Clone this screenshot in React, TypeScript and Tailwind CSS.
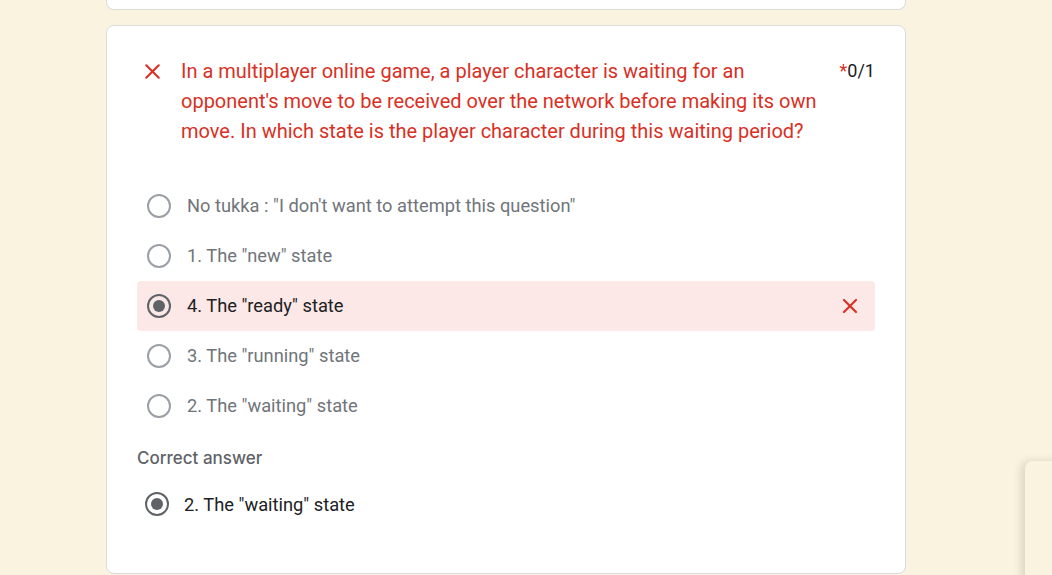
import { X } from "lucide-react";

const opciones = [
  { id: "a", texto: 'No tukka : "I don\'t want to attempt this question"' },
  { id: "b", texto: '1. The "new" state' },
  { id: "c", texto: '4. The "ready" state', elegida: true },
  { id: "d", texto: '3. The "running" state' },
  { id: "e", texto: '2. The "waiting" state' },
];

function Radio({ checked }: { checked?: boolean }) {
  return (
    <div
      className={`w-[24px] h-[24px] rounded-full border-2 flex items-center justify-center flex-shrink-0 ${
        checked ? "border-[#5f6368]" : "border-[#9aa0a6]"
      }`}
    >
      {checked && <div className="w-[12px] h-[12px] rounded-full bg-[#5f6368]" />}
    </div>
  );
}

export default function App() {
  return (
    <main className="h-[575px] overflow-hidden bg-[#faf3df] relative" style={{ fontFamily: "Roboto, 'Liberation Sans', sans-serif" }}>
      <div className="ml-[106px] w-[800px]">
        <div className="h-[10px] bg-white border border-t-0 border-[#dadce0] rounded-b-lg" />

        <div className="mt-[15px] bg-white border border-[#dadce0] rounded-lg h-[549px] pl-[30px] pr-[30px] pt-[30px]">
          <div className="flex items-start">
            <X size={25} strokeWidth={2} className="text-[#d93025] mt-[3px] ml-[3px] flex-shrink-0" />
            <p className="ml-[16px] text-[20px] leading-[30px] text-[#d93025] w-[655px] flex-shrink-0">
              In a multiplayer online game, a player character is waiting for an opponent's move to be received over the network before making its own move. In which state is the player character during this waiting period?
            </p>
            <div className="ml-auto text-[18px] leading-[30px] text-[#202124]">
              <span className="text-[#d93025]">*</span>0/1
            </div>
          </div>

          <div className="mt-[35px] flex flex-col">
            {opciones.map((o) => (
              <div
                key={o.id}
                className={`h-[50px] flex items-center pl-[10px] pr-[13px] rounded-[4px] ${o.elegida ? "bg-[#fce8e6]" : ""}`}
              >
                <Radio checked={o.elegida} />
                <span className={`ml-[16px] text-[18.3px] ${o.elegida ? "text-[#202124]" : "text-[#70757a]"}`}>
                  {o.texto}
                </span>
                {o.elegida && <X size={24} strokeWidth={2.2} className="ml-auto text-[#d93025]" />}
              </div>
            ))}
          </div>

          <p className="mt-[15px] text-[17px] font-medium text-[#5f6368]" style={{ fontFamily: "Inter, 'Open Sans', sans-serif" }}>
            Correct answer
          </p>
          <div className="mt-[19px] flex items-center pl-[8px]">
            <Radio checked />
            <span className="ml-[15px] text-[18.3px] text-[#202124]">2. The "waiting" state</span>
          </div>
        </div>
      </div>

      <div className="absolute left-[1025px] top-[461px] w-[60px] h-[150px] bg-[#faf3df] rounded-tl-lg shadow-[-4px_0_8px_rgba(0,0,0,0.12)]" />
    </main>
  );
}
